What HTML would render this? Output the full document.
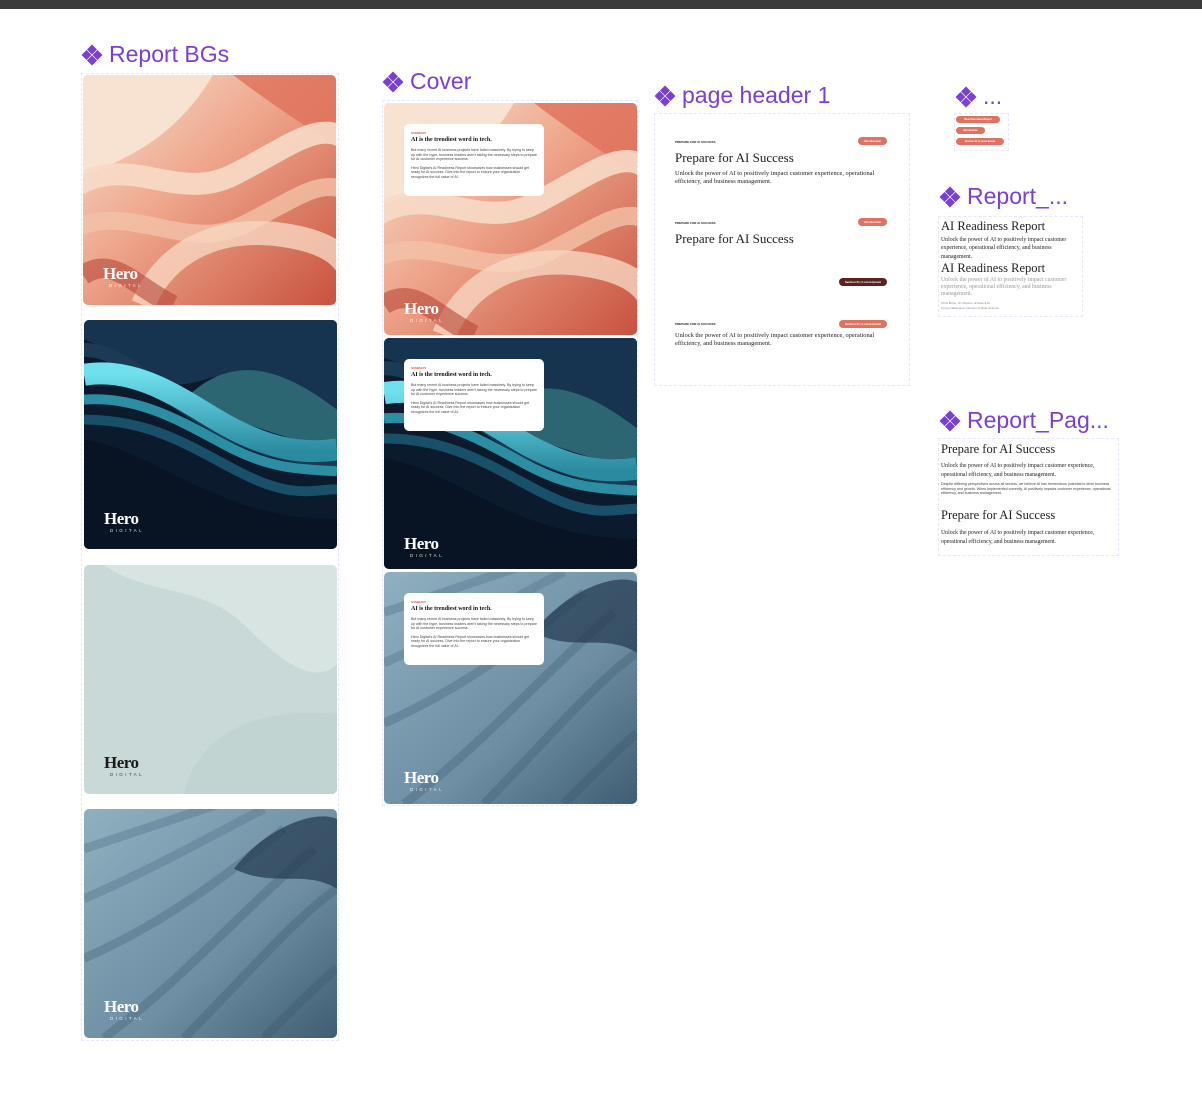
<!DOCTYPE html>
<html><head><meta charset="utf-8"><style>
*{margin:0;padding:0;box-sizing:border-box}
body{width:1202px;height:1114px;background:#fff;position:relative;overflow:hidden;font-family:"Liberation Sans",sans-serif}
.top{position:absolute;left:0;top:0;width:1202px;height:9px;background:#3b3b3b}
.lab{position:absolute;color:#7a3fd4;font-size:23px;display:flex;align-items:center;gap:6px;white-space:nowrap}
.lab svg{width:22px;height:22px}
.fr{position:absolute;border:1px dashed #ebe5fa}
.card{position:absolute;width:253px;overflow:hidden;border-radius:5px}
.card svg.bg{position:absolute;left:0;top:0;width:100%;height:100%}
.logo{position:absolute;left:20px;color:#fff;font-family:"Liberation Serif",serif;font-weight:bold;font-size:17px;letter-spacing:-0.5px;line-height:1}
.logo small{display:block;font-family:"Liberation Sans",sans-serif;font-weight:normal;font-size:4.5px;letter-spacing:2.4px;margin-top:2px;padding-left:6px;opacity:.85}
.sum{position:absolute;left:20px;top:21px;width:140px;height:72px;background:#fff;border-radius:5px;padding:7px 7px;font-size:3.6px;line-height:4.4px;color:#444}
.sum .k{color:#d0604a;font-size:3px;font-weight:bold}
.sum .h{font-family:"Liberation Serif",serif;font-weight:bold;font-size:6px;color:#111;margin:2px 0 4px;line-height:7px}
.serif{font-family:"Liberation Serif",serif;color:#222}
.pill{position:absolute;background:#df7260;color:#fff;border-radius:5px;font-size:3px;line-height:8px;height:8px;text-align:center;font-weight:bold}
.tiny{position:absolute;font-size:3px;font-weight:bold;color:#222}
</style></head><body>
<div class="top"></div>

<svg width="0" height="0" style="position:absolute"><defs>
<symbol id="dia" viewBox="0 0 22 22"><g fill="#7a3fd4"><path d="M11 0.5l5 5-5 5-5-5z"/><path d="M11 11.5l5 5-5 5-5-5z"/><path d="M5.5 6l5 5-5 5-5-5z"/><path d="M16.5 6l5 5-5 5-5-5z"/></g></symbol>
<linearGradient id="pg" x1="0" y1="0" x2="1" y2="1"><stop offset="0" stop-color="#f8e2d0"/><stop offset=".45" stop-color="#eea48a"/><stop offset="1" stop-color="#c8523e"/></linearGradient>
<linearGradient id="cy" x1="0" y1="0" x2="0" y2="1"><stop offset="0" stop-color="#6ee0ee"/><stop offset="1" stop-color="#2a8aa0"/></linearGradient>
<linearGradient id="bgr" x1="0" y1="0" x2="1" y2="1"><stop offset="0" stop-color="#8fb0c0"/><stop offset=".6" stop-color="#6d8ea3"/><stop offset="1" stop-color="#3f5d73"/></linearGradient>
<symbol id="peach" viewBox="0 0 253 230" preserveAspectRatio="none">
<rect width="253" height="230" fill="url(#pg)"/>
<path d="M0 0H130C100 50 60 80 0 100Z" fill="#f8e3d2"/>
<path d="M150 0H253V70C220 50 190 30 150 0Z" fill="#e0705a" opacity=".8"/>
<path d="M-20 120C40 70 90 130 150 100S240 40 270 70" stroke="#f7dac6" stroke-width="22" fill="none" opacity=".9"/>
<path d="M-20 160C40 120 100 180 160 150S240 100 270 120" stroke="#f2c2a8" stroke-width="18" fill="none" opacity=".8"/>
<path d="M60 230C80 180 130 150 200 160S260 200 270 190" stroke="#f7d6c0" stroke-width="24" fill="none" opacity=".8"/>
<path d="M0 200C30 180 50 210 90 230" stroke="#b8483a" stroke-width="20" fill="none" opacity=".6"/>
</symbol>
<symbol id="teal" viewBox="0 0 253 230" preserveAspectRatio="none">
<rect width="253" height="230" fill="#0c1a2e"/>
<path d="M0 0H253V110C220 90 180 40 120 60S40 30 0 20Z" fill="#163450"/>
<path d="M100 80C150 30 200 50 253 90V130C200 120 150 100 100 80Z" fill="#2b6672"/>
<path d="M0 30C40 30 70 70 120 100S210 140 253 140" stroke="#1a3a55" stroke-width="14" fill="none"/>
<path d="M0 55C60 45 110 90 150 110S220 135 253 130" stroke="url(#cy)" stroke-width="22" fill="none"/>
<path d="M0 80C60 75 110 110 150 130S220 150 253 152" stroke="#2b8ea3" stroke-width="10" fill="none"/>
<path d="M0 100C70 100 110 130 160 155S230 170 253 170" stroke="#18506a" stroke-width="10" fill="none"/>
<path d="M0 120C70 130 130 200 253 200V230H0Z" fill="#081324"/>
</symbol>
<symbol id="light" viewBox="0 0 253 230" preserveAspectRatio="none">
<rect width="253" height="230" fill="#c9d9d8"/>
<path d="M20 0C60 30 120 20 160 60S230 120 253 100V0Z" fill="#dbe6e4" opacity=".8"/>
<path d="M100 230C110 180 160 140 253 150V230Z" fill="#c0d2d1" opacity=".8"/>
</symbol>
<symbol id="blue" viewBox="0 0 253 230" preserveAspectRatio="none">
<rect width="253" height="230" fill="url(#bgr)"/>
<g fill="none" stroke-width="9" opacity=".45">
<path d="M0 40C60 20 120 0 150 -10" stroke="#5a7b90"/>
<path d="M0 90C70 60 140 20 180 0" stroke="#5a7b90"/>
<path d="M0 150C90 110 150 60 200 20" stroke="#4f7086"/>
<path d="M20 230C100 170 160 100 230 40" stroke="#4a6a80"/>
<path d="M100 230C160 170 210 110 253 80" stroke="#46667c"/>
<path d="M180 230C210 200 240 170 253 160" stroke="#3e5e74"/>
</g>
<path d="M150 60C180 20 230 0 253 10V80C220 60 190 80 150 60Z" fill="#22374d" opacity=".7"/>
</symbol>
</defs></svg>

<div class="lab" style="left:81px;top:41px"><svg><use href="#dia"/></svg>Report BGs</div>
<div class="lab" style="left:382px;top:68px"><svg><use href="#dia"/></svg>Cover</div>
<div class="lab" style="left:654px;top:82px"><svg><use href="#dia"/></svg>page header 1</div>
<div class="lab" style="left:955px;top:83px"><svg><use href="#dia"/></svg>...</div>
<div class="lab" style="left:939px;top:183px"><svg><use href="#dia"/></svg>Report_...</div>
<div class="lab" style="left:939px;top:407px"><svg><use href="#dia"/></svg>Report_Pag...</div>

<div class="fr" style="left:81px;top:73px;width:258px;height:968px"></div>
<div class="card" style="left:83px;top:75px;height:230px"><svg class="bg"><use href="#peach"/></svg><div class="logo" style="top:190px">Hero<small>DIGITAL</small></div></div>
<div class="card" style="left:84px;top:320px;height:229px"><svg class="bg"><use href="#teal"/></svg><div class="logo" style="top:190px">Hero<small>DIGITAL</small></div></div>
<div class="card" style="left:84px;top:565px;height:229px"><svg class="bg"><use href="#light"/></svg><div class="logo" style="top:189px;color:#1a1a1a">Hero<small>DIGITAL</small></div></div>
<div class="card" style="left:84px;top:809px;height:229px"><svg class="bg"><use href="#blue"/></svg><div class="logo" style="top:189px">Hero<small>DIGITAL</small></div></div>

<div class="fr" style="left:382px;top:100px;width:256px;height:706px"></div>
<div class="card" style="left:384px;top:103px;height:232px"><svg class="bg"><use href="#peach"/></svg>
<div class="sum"><div class="k">SUMMARY</div><div class="h">AI is the trendiest word in tech.</div>But many recent AI business projects have failed massively. By trying to keep up with the hype, business leaders aren't taking the necessary steps to prepare for AI customer experience success.<br><br>Hero Digital's AI Readiness Report showcases how businesses should get ready for AI success. Dive into the report to ensure your organization recognizes the full value of AI.</div>
<div class="logo" style="top:197px">Hero<small>DIGITAL</small></div></div>
<div class="card" style="left:384px;top:338px;height:231px"><svg class="bg"><use href="#teal"/></svg>
<div class="sum"><div class="k">SUMMARY</div><div class="h">AI is the trendiest word in tech.</div>But many recent AI business projects have failed massively. By trying to keep up with the hype, business leaders aren't taking the necessary steps to prepare for AI customer experience success.<br><br>Hero Digital's AI Readiness Report showcases how businesses should get ready for AI success. Dive into the report to ensure your organization recognizes the full value of AI.</div>
<div class="logo" style="top:197px">Hero<small>DIGITAL</small></div></div>
<div class="card" style="left:384px;top:572px;height:232px"><svg class="bg"><use href="#blue"/></svg>
<div class="sum"><div class="k">SUMMARY</div><div class="h">AI is the trendiest word in tech.</div>But many recent AI business projects have failed massively. By trying to keep up with the hype, business leaders aren't taking the necessary steps to prepare for AI customer experience success.<br><br>Hero Digital's AI Readiness Report showcases how businesses should get ready for AI success. Dive into the report to ensure your organization recognizes the full value of AI.</div>
<div class="logo" style="top:197px">Hero<small>DIGITAL</small></div></div>

<div class="fr" style="left:654px;top:113px;width:256px;height:273px"></div>
<div class="tiny" style="left:675px;top:140px">PREPARE FOR AI SUCCESS</div>
<div class="pill" style="left:858px;top:137px;width:29px">Introduction</div>
<div class="serif" style="position:absolute;left:675px;top:150px;font-size:13px">Prepare for AI Success</div>
<div class="serif" style="position:absolute;left:675px;top:170px;font-size:6.4px;line-height:8px;width:200px">Unlock the power of AI to positively impact customer experience, operational efficiency, and business management.</div>
<div class="tiny" style="left:675px;top:221px">PREPARE FOR AI SUCCESS</div>
<div class="pill" style="left:858px;top:218px;width:29px">Introduction</div>
<div class="serif" style="position:absolute;left:675px;top:231px;font-size:13px">Prepare for AI Success</div>
<div class="pill" style="left:839px;top:278px;width:48px;background:#5a231d">Section 01 | Lorem Ipsum</div>
<div class="tiny" style="left:675px;top:322px">PREPARE FOR AI SUCCESS</div>
<div class="pill" style="left:839px;top:320px;width:48px">Section 01 | Lorem Ipsum</div>
<div class="serif" style="position:absolute;left:675px;top:332px;font-size:6.4px;line-height:8px;width:200px">Unlock the power of AI to positively impact customer experience, operational efficiency, and business management.</div>

<div class="fr" style="left:954px;top:113px;width:55px;height:38px"></div>
<div class="pill" style="left:956px;top:116px;width:44px;height:7px;line-height:7px;font-size:2.5px">Read Executive Report</div>
<div class="pill" style="left:956px;top:127px;width:29px;height:7px;line-height:7px;font-size:2.5px">Introduction</div>
<div class="pill" style="left:956px;top:138px;width:48px;height:7px;line-height:7px;font-size:2.5px">Section 01 | Lorem Ipsum</div>

<div class="fr" style="left:938px;top:216px;width:145px;height:101px"></div>
<div class="serif" style="position:absolute;left:941px;top:219px;font-size:12.5px">AI Readiness Report</div>
<div class="serif" style="position:absolute;left:941px;top:236px;font-size:5.8px;line-height:8.4px;width:140px">Unlock the power of AI to positively impact customer experience, operational efficiency, and business management.</div>
<div class="serif" style="position:absolute;left:941px;top:261px;font-size:12.5px">AI Readiness Report</div>
<div class="serif" style="position:absolute;left:941px;top:277px;font-size:5.8px;line-height:7px;width:130px;color:#999">Unlock the power of AI to positively impact customer experience, operational efficiency, and business management.</div>
<div style="position:absolute;left:941px;top:301px;font-size:3px;line-height:5px;color:#888">Chris Boyle, Sr. Director of Data &amp; AI<br>Kyogo Nakayama, Director of Data Science</div>

<div class="fr" style="left:938px;top:438px;width:181px;height:118px"></div>
<div class="serif" style="position:absolute;left:941px;top:442px;font-size:12.5px">Prepare for AI Success</div>
<div class="serif" style="position:absolute;left:941px;top:462px;font-size:5.8px;line-height:8.6px;width:180px">Unlock the power of AI to positively impact customer experience, operational efficiency, and business management.</div>
<div style="position:absolute;left:941px;top:482px;font-size:3.6px;line-height:4.6px;width:178px;color:#444">Despite differing perspectives across all sectors, we believe AI has tremendous potential to drive business efficiency and growth. When implemented correctly, AI positively impacts customer experience, operational efficiency, and business management.</div>
<div class="serif" style="position:absolute;left:941px;top:508px;font-size:12.5px">Prepare for AI Success</div>
<div class="serif" style="position:absolute;left:941px;top:529px;font-size:5.8px;line-height:8.6px;width:180px">Unlock the power of AI to positively impact customer experience, operational efficiency, and business management.</div>
</body></html>
